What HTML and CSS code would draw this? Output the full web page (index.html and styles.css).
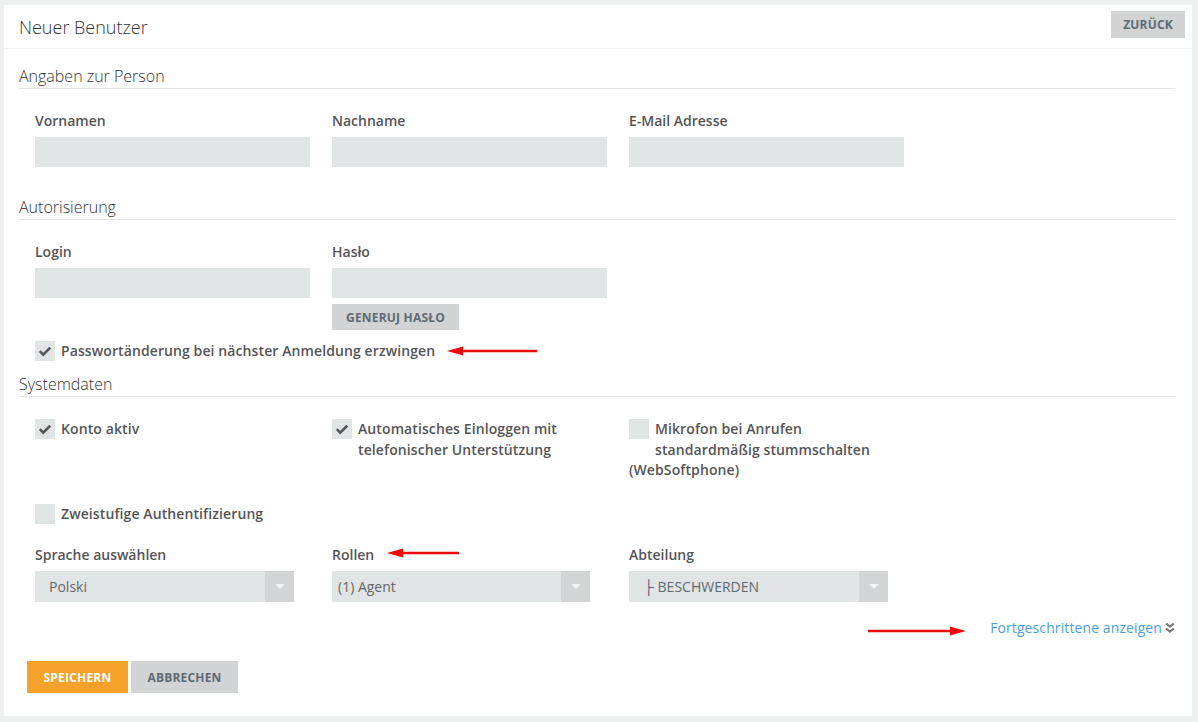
FILE: index.html
```html
<!DOCTYPE html>
<html lang="de">
<head>
<meta charset="utf-8">
<title>Neuer Benutzer</title>
<link rel="stylesheet" href="styles.css">
</head>
<body>
<div class="page">
  <div class="panel">
    <div class="panel-head">
      <h1 class="panel-title">Neuer Benutzer</h1>
      <button class="btn btn-gray btn-back">ZURÜCK</button>
    </div>

    <div class="panel-body">
      <h2 class="section-title">Angaben zur Person</h2>
      <div class="row">
        <div class="field">
          <label class="field-label">Vornamen</label>
          <div class="input"></div>
        </div>
        <div class="field">
          <label class="field-label">Nachname</label>
          <div class="input"></div>
        </div>
        <div class="field">
          <label class="field-label">E-Mail Adresse</label>
          <div class="input"></div>
        </div>
      </div>

      <h2 class="section-title">Autorisierung</h2>
      <div class="row">
        <div class="field">
          <label class="field-label">Login</label>
          <div class="input"></div>
        </div>
        <div class="field">
          <label class="field-label">Hasło</label>
          <div class="input"></div>
          <button class="btn btn-gray btn-small">GENERUJ HASŁO</button>
        </div>
      </div>
      <div class="check-line">
        <span class="check checked"><svg viewBox="0 0 20 20"><path d="M4.8 10.2l3.4 3.4L15.2 6.8" fill="none" stroke="#555" stroke-width="2.6"/></svg></span>
        <span class="check-text">Passwortänderung bei nächster Anmeldung erzwingen</span>
      </div>

      <h2 class="section-title">Systemdaten</h2>
      <div class="row checks">
        <div class="check-block">
          <span class="check checked"><svg viewBox="0 0 20 20"><path d="M4.8 10.2l3.4 3.4L15.2 6.8" fill="none" stroke="#555" stroke-width="2.6"/></svg></span>
          Konto aktiv
        </div>
        <div class="check-block">
          <span class="check checked"><svg viewBox="0 0 20 20"><path d="M4.8 10.2l3.4 3.4L15.2 6.8" fill="none" stroke="#555" stroke-width="2.6"/></svg></span>
          Automatisches Einloggen mit telefonischer Unterstützung
        </div>
        <div class="check-block">
          <span class="check"></span>
          Mikrofon bei Anrufen standardmäßig stummschalten (WebSoftphone)
        </div>
      </div>
      <div class="row checks-2">
        <div class="check-block">
          <span class="check"></span>
          Zweistufige Authentifizierung
        </div>
      </div>

      <div class="row selects">
        <div class="field">
          <label class="field-label">Sprache auswählen</label>
          <div class="select"><span class="select-value pad-wide">Polski</span><span class="select-arrow"></span></div>
        </div>
        <div class="field">
          <label class="field-label">Rollen</label>
          <div class="select"><span class="select-value pad-narrow">(1) Agent</span><span class="select-arrow"></span></div>
        </div>
        <div class="field">
          <label class="field-label">Abteilung</label>
          <div class="select"><span class="select-value pad-tree"><span class="tree">├</span> BESCHWERDEN</span><span class="select-arrow"></span></div>
        </div>
      </div>

      <div class="advanced">
        <a class="advanced-link" href="#">Fortgeschrittene anzeigen</a>
        <svg class="dbl-chevron" viewBox="0 0 10 12"><path d="M1.2 1.5l3.8 3 3.8-3M1.2 6.5l3.8 3 3.8-3" fill="none" stroke="#777" stroke-width="2.2"/></svg>
      </div>

      <div class="actions">
        <button class="btn btn-orange">SPEICHERN</button>
        <button class="btn btn-gray">ABBRECHEN</button>
      </div>
    </div>
  </div>

  <!-- red pointer arrows over the form -->
  <svg class="pointer p1" viewBox="0 0 90 10"><path d="M12 5H90" stroke="#ee0a0a" stroke-width="2.4"/><path d="M0 5l16-4.5v9z" fill="#ee0a0a"/></svg>
  <svg class="pointer p2" viewBox="0 0 72 10"><path d="M12 5H72" stroke="#ee0a0a" stroke-width="2.4"/><path d="M0 5l16-4.5v9z" fill="#ee0a0a"/></svg>
  <svg class="pointer p3" viewBox="0 0 98 10"><path d="M0 5H86" stroke="#ee0a0a" stroke-width="2.4"/><path d="M98 5l-16-4.5v9z" fill="#ee0a0a"/></svg>
</div>
</body>
</html>
```

FILE: styles.css
```css
* { box-sizing: border-box; }

html, body {
  margin: 0;
  padding: 0;
}

body {
  background: #eef0ef;
  font-family: "Open Sans", "Liberation Sans", sans-serif;
  color: #555;
  width: 1198px;
  height: 722px;
  overflow: hidden;
}

.page {
  position: relative;
  padding: 5px 6px 6px 4px;
}

.panel {
  background: #fff;
  height: 711px;
}

.panel-head {
  display: flex;
  align-items: center;
  justify-content: space-between;
  height: 44px;
  padding: 0 7px 0 15px;
  border-bottom: 1px solid #f0f1f1;
}

.panel-title {
  margin: 0;
  font-size: 18px;
  font-weight: 300;
  color: #333;
  line-height: 24px;
}

.btn {
  border: 0;
  font-family: "Open Sans", "Liberation Sans", sans-serif;
  font-weight: 700;
  font-size: 12px;
  letter-spacing: 0.2px;
  cursor: pointer;
  padding: 0 16px;
}

.btn-gray {
  background: #d2d3d4;
  color: #5e6a73;
}

.btn-back {
  height: 27px;
  padding: 0 12px;
  margin-top: -4px;
}

.btn-small {
  height: 26px;
  margin-top: 6px;
  align-self: flex-start;
  padding: 0 14px;
}

.btn-orange {
  background: #f5a12a;
  color: #fff;
}

.panel-body {
  padding: 16px 17px 0 15px;
}

.section-title {
  margin: 0;
  font-size: 16px;
  font-weight: 300;
  color: #333;
  line-height: 22px;
  padding-bottom: 1px;
  border-bottom: 1px solid #e3e4e4;
}

.row {
  display: grid;
  grid-template-columns: 275px 275px 275px;
  column-gap: 22px;
  padding-left: 16px;
  margin-top: 22px;
}

.field {
  display: flex;
  flex-direction: column;
}

.field-label {
  font-size: 14px;
  font-weight: 600;
  line-height: 20px;
  color: #555;
  margin-bottom: 6px;
}

.input {
  height: 30px;
  background: #e1e4e5;
}

.row + .section-title {
  margin-top: 29px;
}

.check-line {
  display: flex;
  align-items: center;
  margin: 11px 0 0 16px;
  font-size: 14px;
  font-weight: 600;
  line-height: 20px;
  letter-spacing: 0.1px;
}

.check-line + .section-title {
  margin-top: 12px;
}

.check {
  display: inline-flex;
  width: 20px;
  height: 20px;
  background: #e1e4e5;
  flex: none;
}

.check svg {
  width: 20px;
  height: 20px;
}

.check-text {
  margin-left: 6px;
}

.check-block {
  font-size: 14px;
  font-weight: 600;
  line-height: 20.5px;
  color: #555;
  letter-spacing: 0.1px;
}

.check-block .check {
  float: left;
  margin: 0 6px 21px 0;
}

.checks-2 {
  margin-top: 23px;
}

.checks-2 .check-block .check {
  margin-bottom: 0;
}

.selects {
  margin-top: 21px;
}

.selects .field:nth-child(2) .select { width: 258px; }
.selects .field:nth-child(1) .select,
.selects .field:nth-child(3) .select { width: 259px; }

.select {
  display: flex;
  height: 31px;
  background: #e1e4e5;
}

.select-value {
  flex: 1;
  font-size: 14px;
  line-height: 31px;
  color: #666;
}

.pad-wide { padding-left: 14px; }
.pad-narrow { padding-left: 6px; }
.pad-tree { padding-left: 15px; color: #5e6a73; }

.tree {
  color: #4a5a78;
}

.select-arrow {
  width: 29px;
  background: #d3d4d5;
  display: flex;
  align-items: center;
  justify-content: center;
}

.select-arrow::after {
  content: "";
  border-left: 5px solid transparent;
  border-right: 5px solid transparent;
  border-top: 5px solid #f4f4f4;
}

.advanced {
  display: flex;
  justify-content: flex-end;
  align-items: center;
  margin-top: 16px;
  height: 20px;
  padding-right: 0;
}

.advanced-link {
  font-size: 14px;
  color: #4b9fd8;
  text-decoration: none;
  line-height: 20px;
  letter-spacing: 0.1px;
}

.dbl-chevron {
  width: 10px;
  height: 12px;
  margin-left: 3px;
  margin-top: -1px;
}

.actions {
  display: flex;
  gap: 3px;
  margin-top: 23px;
  padding-left: 8px;
}

.actions .btn {
  height: 32px;
}

.actions .btn-orange { width: 101px; }
.actions .btn-gray { width: 107px; }

.pointer {
  position: absolute;
  height: 10px;
}

.p1 { left: 447px; top: 346px; width: 90px; }
.p2 { left: 387px; top: 548px; width: 72px; }
.p3 { left: 868px; top: 626px; width: 98px; }
```
